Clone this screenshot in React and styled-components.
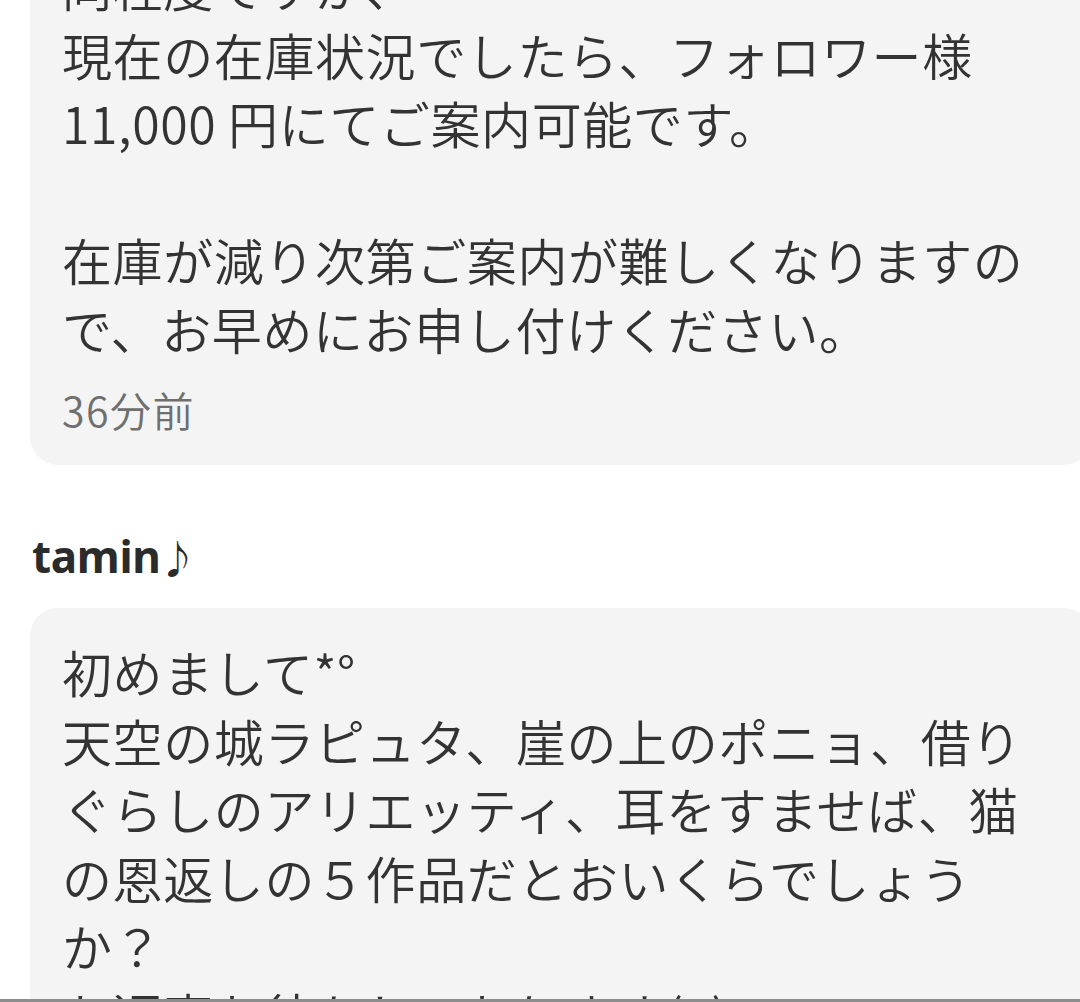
import React from "react";
import styled, { createGlobalStyle } from "styled-components";

const GlobalStyle = createGlobalStyle`
  html, body {
    margin: 0;
    padding: 0;
    background: #ffffff;
    overflow: hidden;
  }
  body {
    font-family: "Noto Sans CJK JP", "Noto Sans", sans-serif;
    color: #333333;
  }
`;

const Screen = styled.div`
  width: 1080px;
  height: 1002px;
  overflow: hidden;
  position: relative;
  background: #ffffff;
`;

const Thread = styled.div`
  display: flex;
  flex-direction: column;
  margin-top: -78px;
`;

const Sender = styled.div`
  font-family: "Noto Sans", "Noto Sans CJK JP", sans-serif;
  font-weight: 700;
  font-size: 44px;
  line-height: 56px;
  color: #2b2b2b;
  margin: 63px 0 22px 32px;
  letter-spacing: -0.3px;
`;

const Note = styled.span`
  font-size: 38px;
  margin-left: -2px;
`;

const Bubble = styled.div`
  background: #f4f4f4;
  border-radius: 28px;
  margin-left: 30px;
  margin-right: -12px;
  padding: 29px 32px 31px 32px;
`;

const MessageText = styled.div`
  font-family: "Noto Sans CJK JP", sans-serif;
  font-weight: 350;
  font-size: 50px;
  line-height: 68.5px;
  letter-spacing: 0.6px;
  color: #333333;
  white-space: pre;
`;

const Timestamp = styled.div`
  font-family: "Noto Sans CJK JP", sans-serif;
  font-weight: 350;
  font-size: 41px;
  line-height: 50px;
  letter-spacing: 1.5px;
  color: #6f6f6f;
  margin-top: 22px;
`;

const BottomEdge = styled.div`
  position: absolute;
  left: 0;
  right: 0;
  bottom: 0;
  height: 3px;
  background: #8d8d8d;
`;

const firstMessage = [
  "同程度ですが、",
  "現在の在庫状況でしたら、フォロワー様",
  "11,000 円にてご案内可能です。",
  "",
  "在庫が減り次第ご案内が難しくなりますの",
  "で、お早めにお申し付けください。",
].join("\n");

const secondMessage = [
  "初めまして*°",
  "天空の城ラピュタ、崖の上のポニョ、借り",
  "ぐらしのアリエッティ、耳をすませば、猫",
  "の恩返しの５作品だとおいくらでしょう",
  "か？",
  "お返事お待ちしております(..)",
].join("\n");

export default function App() {
  return (
    <>
      <GlobalStyle />
      <Screen>
        <Thread>
          <Bubble>
            <MessageText>{firstMessage}</MessageText>
            <Timestamp>36分前</Timestamp>
          </Bubble>
          <Sender>
            tamin<Note>♪</Note>
          </Sender>
          <Bubble>
            <MessageText>{secondMessage}</MessageText>
          </Bubble>
        </Thread>
        <BottomEdge />
      </Screen>
    </>
  );
}
